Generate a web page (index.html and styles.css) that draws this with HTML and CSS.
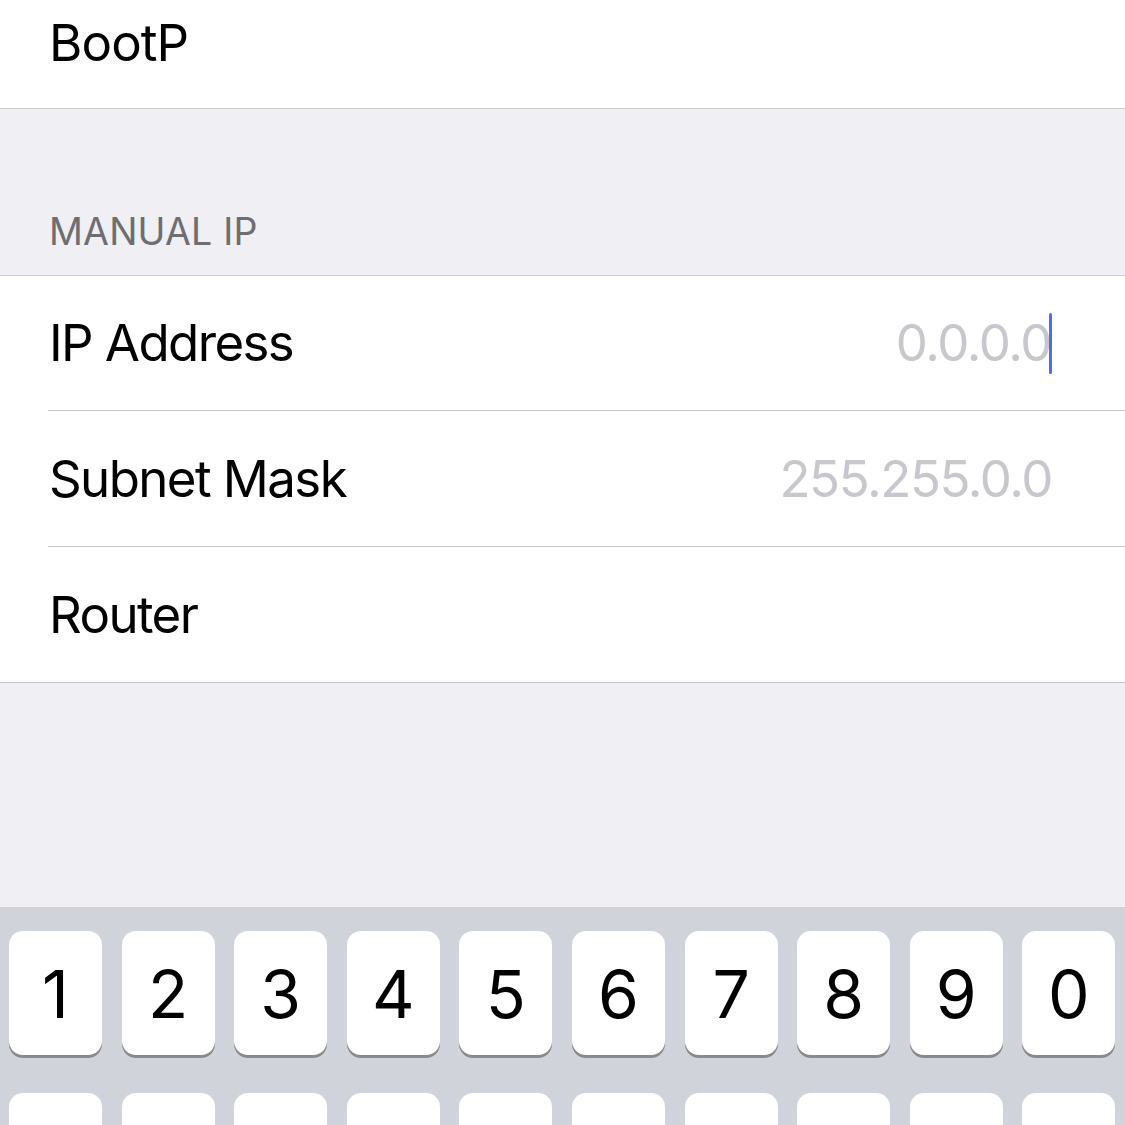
FILE: index.html
```html
<!DOCTYPE html>
<html>
<head>
<meta charset="utf-8">
<link rel="stylesheet" href="styles.css">
</head>
<body>
<div class="screen">
  <div class="top-cell"><span class="label">BootP</span></div>
  <div class="section-gap">
    <div class="section-header">MANUAL IP</div>
  </div>
  <div class="group">
    <div class="cell first">
      <span class="label">IP Address</span>
      <span class="value">0.0.0.0<span class="cursor"></span></span>
    </div>
    <div class="cell">
      <span class="label">Subnet Mask</span>
      <span class="value">255.255.0.0</span>
    </div>
    <div class="cell last">
      <span class="label">Router</span>
      <span class="value"></span>
    </div>
  </div>
  <div class="filler"></div>
  <div class="keyboard">
    <div class="key">1</div>
    <div class="key">2</div>
    <div class="key">3</div>
    <div class="key">4</div>
    <div class="key">5</div>
    <div class="key">6</div>
    <div class="key">7</div>
    <div class="key">8</div>
    <div class="key">9</div>
    <div class="key">0</div>
    <div class="key"></div>
    <div class="key"></div>
    <div class="key"></div>
    <div class="key"></div>
    <div class="key"></div>
    <div class="key"></div>
    <div class="key"></div>
    <div class="key"></div>
    <div class="key"></div>
    <div class="key"></div>
  </div>
</div>
</body>
</html>
```

FILE: styles.css
```css
html, body {
  margin: 0;
  padding: 0;
  width: 1125px;
  height: 1125px;
  overflow: hidden;
  background: #efeff4;
}

.screen {
  display: flex;
  flex-direction: column;
  height: 1125px;
  overflow: hidden;
  font-family: Inter, "Liberation Sans", sans-serif;
  color: #000;
}

.screen > * {
  flex-shrink: 0;
}

.top-cell {
  height: 109px;
  background: #fff;
  border-bottom: 1px solid #c8c7cc;
  padding-left: 49px;
  display: flex;
  align-items: flex-start;
  box-sizing: border-box;
}

.top-cell .label {
  margin-top: 12px;
  letter-spacing: -0.9px;
}

.label {
  font-size: 51px;
  line-height: 62px;
  letter-spacing: -1.6px;
}

.section-gap {
  height: 166px;
  display: flex;
  align-items: flex-end;
  padding-left: 49px;
}

.section-header {
  font-size: 37.5px;
  line-height: 46px;
  color: #6d6d72;
  letter-spacing: 0.2px;
  padding-bottom: 20px;
}

.group {
  background: #fff;
  border-top: 1px solid #c8c7cc;
  border-bottom: 1px solid #c8c7cc;
  padding-left: 48px;
}

.cell {
  height: 136px;
  box-sizing: border-box;
  display: flex;
  align-items: center;
  justify-content: space-between;
  padding-left: 1px;
  padding-right: 73px;
  border-bottom: 1px solid #c8c7cc;
}

.cell.first {
  height: 135px;
}

.cell.last {
  height: 135px;
  border-bottom: none;
}

.value {
  font-size: 51px;
  line-height: 62px;
  color: #c7c7cd;
  letter-spacing: -1.4px;
  display: flex;
  align-items: center;
}

.cursor {
  display: inline-block;
  width: 3px;
  height: 61px;
  background: #4a6cf7;
  border-radius: 1.5px;
  margin-left: -2px;
}

.filler {
  height: 224px;
}

.keyboard {
  flex: 1 1 auto;
  min-height: 0;
  overflow: hidden;
  background: #d0d3d9;
  display: grid;
  grid-template-columns: repeat(10, 93px);
  grid-auto-rows: 124px;
  column-gap: 19.6px;
  row-gap: 38px;
  padding: 24px 9px 0;
}

.key {
  background: #fff;
  border-radius: 14px;
  box-shadow: 0 3px 0 #898a8e;
  display: flex;
  align-items: center;
  justify-content: center;
  font-size: 66px;
  font-weight: 400;
  padding-top: 2px;
  box-sizing: border-box;
}
```
